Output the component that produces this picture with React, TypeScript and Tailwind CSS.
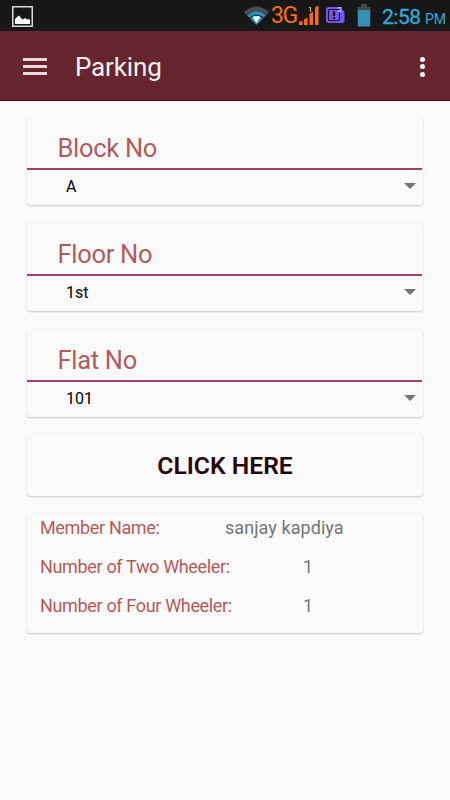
import { clsx } from 'clsx'

const FIELDS = [
  { label: 'Block No', value: 'A' },
  { label: 'Floor No', value: '1st' },
  { label: 'Flat No', value: '101' },
]

const CARD = 'rounded-[4px] bg-[#fafafa] shadow-[0_1px_2px_rgba(0,0,0,0.2)]'

function StatusBar() {
  return (
    <div className="flex h-[31px] items-center bg-[#171717]">
      <svg className="ml-3 mt-px h-[21px] w-[21px]" viewBox="0 0 21 21">
        <rect x="0.75" y="0.75" width="19.5" height="19.5" fill="none" stroke="#dcdade" strokeWidth="1.5" />
        <path d="M3 18V13L5 11L7 9.5L9 12L10.5 13.5L13 12L15 13.5L17 13L18 14V18Z" fill="#fff" />
      </svg>

      <div className="ml-auto flex h-full items-center">
        {/* Wifi */}
        <svg className="mb-px h-[19px] w-[25px]" viewBox="0 0 25 19">
          <path d="M0 6Q12.5 -5 25 6L22.5 9Q12.5 0.5 2.5 9Z" fill="#4b4d50" />
          <path d="M3 9.2Q12.5 0.7 22 9.2L19.8 11.8Q12.5 5.5 5.2 11.8Z" fill="#288db5" />
          <path d="M6 12.6Q12.5 6.5 19 12.6L12.5 19Z" fill="#288db5" />
          <path d="M8.5 11L10.5 10.3H14.5L16.5 11L12.5 17Z" fill="#fff" />
        </svg>
        <span className="ml-0.5 w-[26px] text-[23px] leading-[30px] tracking-[-1.4px] text-[#ff6b12]">3G</span>

        {/* Signal */}
        <svg className="ml-0.5 h-[21px] w-5" viewBox="0 0 20 21">
          <path d="M0 20V17L3.5 15.5V20ZM5 20V14.5L8.5 12.5V20ZM10.5 20V9L14 6.5V20ZM16 20V2.5L19.5 0.5V20Z" fill="#ff6b12" />
          <text x="9" y="6.5" fontSize="7.5" fill="#fff">1</text>
        </svg>

        {/* Second sim */}
        <svg className="mb-0.5 ml-1.5 h-5 w-5" viewBox="0 0 20 20">
          <path d="M3.5 2H14L19.5 7V15.5Q19.5 18 17 18H3.5Q1 18 1 15.5V4.5Q1 2 3.5 2Z" fill="#7655ff" />
          <rect x="3.5" y="4.5" width="11" height="11" rx="1" fill="none" stroke="#171717" strokeWidth="1.2" />
          <path d="M7.8 6.3H10.2V11H7.8ZM7.8 12H10.2V14H7.8Z" fill="#171717" />
          <text x="12.5" y="7" fontSize="8" fill="#fff">2</text>
        </svg>

        {/* Battery */}
        <svg className="ml-3 h-[23px] w-3.5" viewBox="0 0 14 23">
          <path d="M4 3V0H10V3H13.5V23H0.5V3Z" fill="#45484a" />
          <rect x="1" y="6" width="12" height="16" fill="#358fb5" />
        </svg>
        <span className="ml-[11px] mt-0.5 w-10 text-[21px] leading-[30px] tracking-[-0.5px] text-[#33a9dc] [-webkit-text-stroke:0.3px]">2:58</span>
        <span className="ml-[3px] mr-0.5 mt-1.5 w-[23px] text-[14px] leading-[30px] text-[#33a9dc]">PM</span>
      </div>
    </div>
  )
}

function AppBar() {
  return (
    <header className="flex h-[70px] items-center border-b border-[#520f18] bg-[#66252f]">
      <button className="ml-[23px] mt-px flex w-6 flex-col gap-1" aria-label="Menu">
        <span className="h-[3px] bg-[#e6dadc]" />
        <span className="h-[3px] bg-[#e6dadc]" />
        <span className="h-[3px] bg-[#e6dadc]" />
      </button>
      <h1 className="ml-7 mt-0.5 text-[26px] leading-8 tracking-[-0.15px] text-[#f6f1f2]">Parking</h1>
      <button className="ml-auto mr-[25px] mt-0.5 flex flex-col gap-[2.5px]" aria-label="More">
        <span className="size-[5px] rounded-full bg-white" />
        <span className="size-[5px] rounded-full bg-white" />
        <span className="size-[5px] rounded-full bg-white" />
      </button>
    </header>
  )
}

interface SelectCardProps {
  label: string
  value: string
}

function SelectCard({ label, value }: SelectCardProps) {
  return (
    <div className={clsx(CARD, 'h-[88px]')}>
      <div className="mr-px h-[53px] border-b-2 border-[#9c4267] pl-[30.5px] pt-[15px] text-[25.5px] leading-8 tracking-[-0.3px] text-[#b25b5d]">
        {label}
      </div>
      <div className="flex h-[34px] items-center justify-between pl-[39px] pr-[7px] text-[16px] text-black">
        <span>{value}</span>
        <svg className="mb-0.5 h-1.5 w-3" viewBox="0 0 12 6">
          <path d="M0 0H12L6 6Z" fill="#747474" />
        </svg>
      </div>
    </div>
  )
}

export default function App() {
  return (
    <div className="flex h-[800px] w-[450px] flex-col overflow-hidden bg-[#fafafa] font-['Roboto','Liberation_Sans',sans-serif]">
      <StatusBar />
      <AppBar />

      <main className="flex flex-col px-[27px] pt-4">
        <div className="flex flex-col gap-[18px]">
          {FIELDS.map((field) => (
            <SelectCard key={field.label} label={field.label} value={field.value} />
          ))}
        </div>

        <button className={clsx(CARD, 'mt-[17px] h-[62px] pt-0.5 text-[24.7px] font-semibold text-[#280407]')}>
          CLICK HERE
        </button>

        {/* Member details */}
        <div className={clsx(CARD, 'mt-[17px] flex h-[120px] flex-col pl-[13px] text-[18px] leading-[29px] text-[#b25b5d]')}>
          <div className="flex h-[39px]">
            <span className="w-[185px] tracking-[-0.34px]">Member Name:</span>
            <span className="tracking-[0.07px] text-[#757575]">sanjay kapdiya</span>
          </div>
          <div className="flex h-[39px]">
            <span className="w-[263px] tracking-[-0.34px]">Number of Two Wheeler:</span>
            <span className="text-[#757575]">1</span>
          </div>
          <div className="flex h-[39px]">
            <span className="w-[263px] tracking-[-0.34px]">Number of Four Wheeler:</span>
            <span className="text-[#757575]">1</span>
          </div>
        </div>
      </main>
    </div>
  )
}
